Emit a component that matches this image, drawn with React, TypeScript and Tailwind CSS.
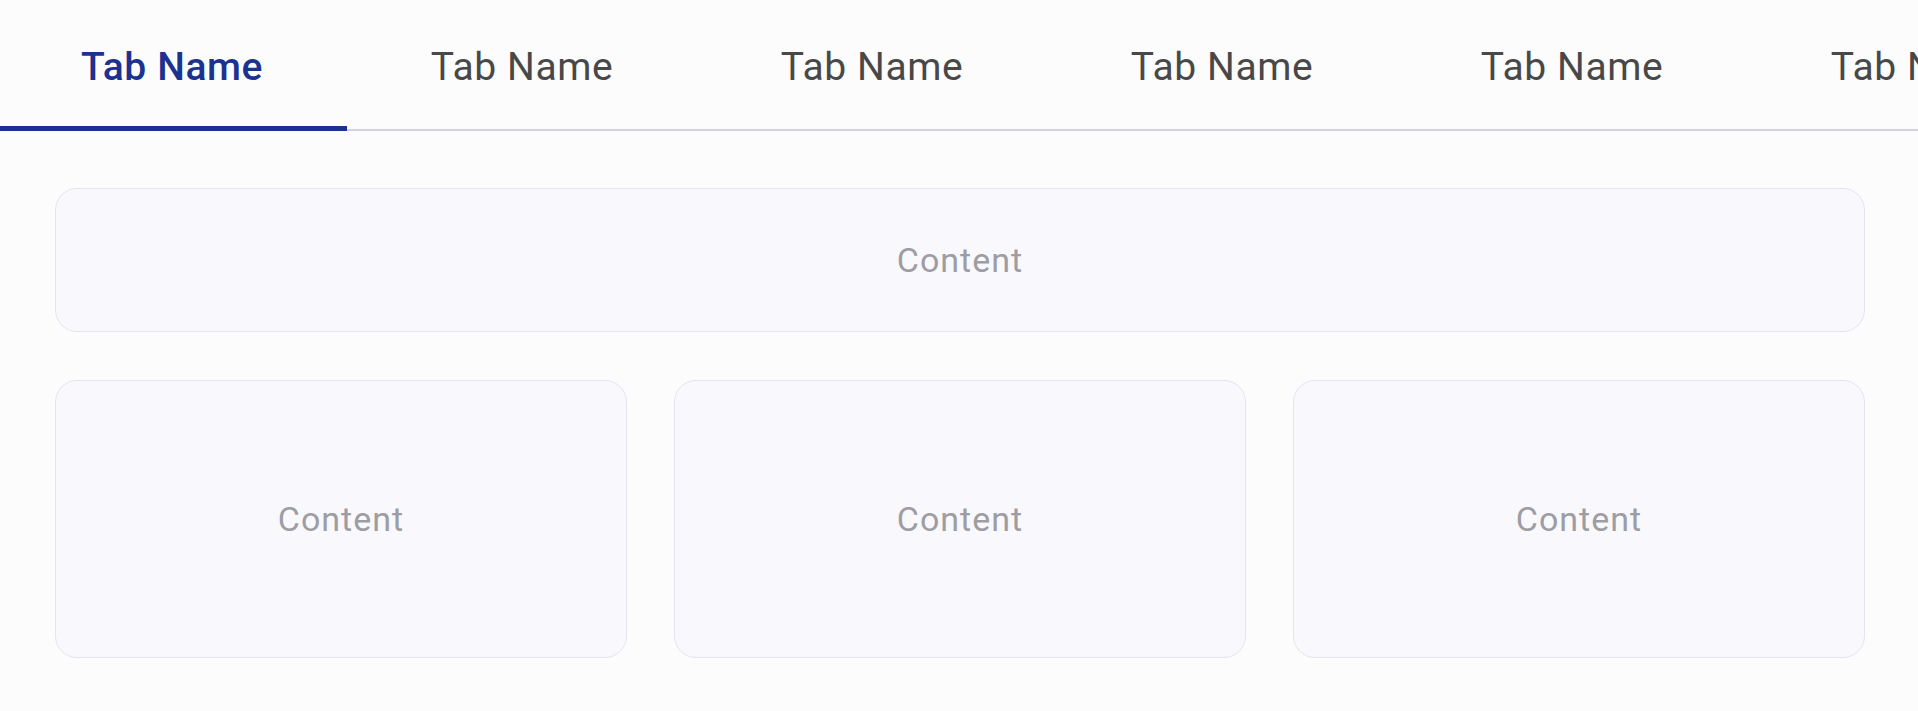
import { useState } from 'react'

const tabs = ['Tab Name', 'Tab Name', 'Tab Name', 'Tab Name', 'Tab Name', 'Tab Name']

function ContentCard({ className = '' }: { className?: string }) {
  return (
    <div
      className={`flex items-center justify-center rounded-[22px] border border-[#e4e4f2] bg-[#f9f9fd] ${className}`}
    >
      <span className="text-[34px] tracking-[1px] text-[#9d9da3]">Content</span>
    </div>
  )
}

export default function App() {
  const [active, setActive] = useState(0)

  return (
    <div className="h-[711px] w-full overflow-hidden bg-[#fcfcfc] font-['Roboto',sans-serif]">
      <div className="border-b-2 border-[#d3d3da]">
        <div className="-ml-[3px] flex h-[129px]">
          {tabs.map((name, i) => (
            <button
              key={i}
              onClick={() => setActive(i)}
              className={`relative flex h-full w-[350px] shrink-0 items-center justify-center pt-[6px] text-[39px] tracking-[0.6px] ${
                active === i ? 'font-medium text-[#1c3291]' : 'text-[#484848]'
              }`}
            >
              <span className="whitespace-nowrap">{name}</span>
              {active === i && <span className="absolute -bottom-[2px] left-0 right-0 h-[5px] bg-[#1c3291]" />}
            </button>
          ))}
        </div>
      </div>

      {/* Tab panel */}
      <div className="flex flex-col gap-[48px] pl-[55px] pr-[53px] pt-[57px]">
        <ContentCard className="h-[144px]" />
        <div className="grid grid-cols-3 gap-[47px]">
          <ContentCard className="h-[278px]" />
          <ContentCard className="h-[278px]" />
          <ContentCard className="h-[278px]" />
        </div>
      </div>
    </div>
  )
}
